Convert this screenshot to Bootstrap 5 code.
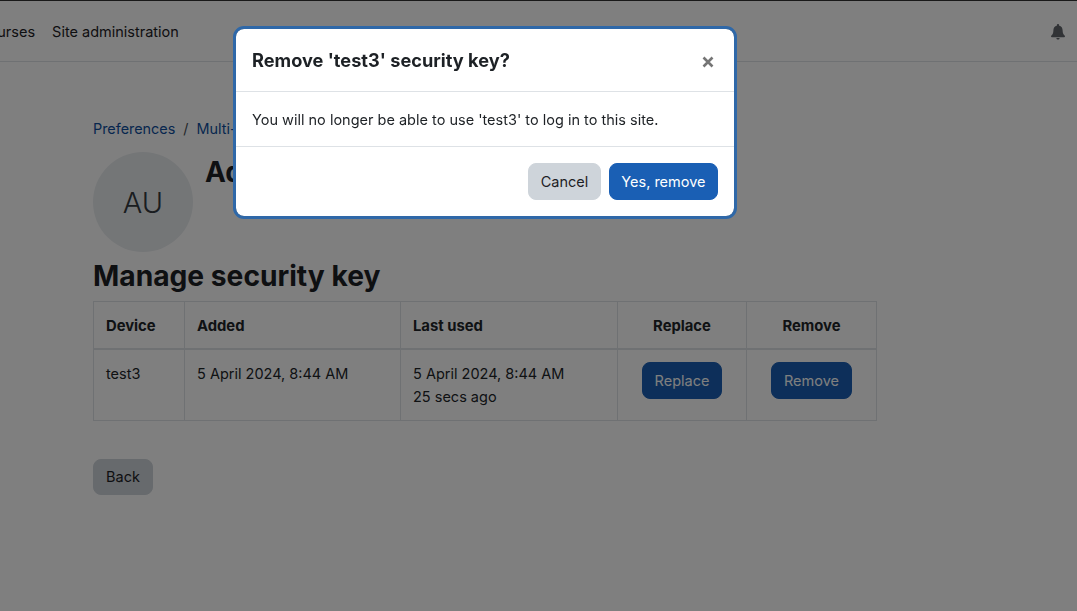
<!DOCTYPE html>
<html lang="en">
<head>
  <meta charset="UTF-8">
  <title>Manage security key</title>
  <link href="https://cdn.jsdelivr.net/npm/bootstrap@5.3.3/dist/css/bootstrap.min.css" rel="stylesheet">
  <style>
    html, body { height: 100%; overflow: hidden; }
    body { font-family: Inter, "Liberation Sans", sans-serif; font-size: 14.5px; color: #1d2125; background: #fff; border-top: 1px solid #333; }
    .top-nav { height: 61px; border-bottom: 1px solid #dee2e6; background: #fff; padding: 2px 12px 0 0; }
    .top-nav a { color: #1d2125; text-decoration: none; }
    .nav-first { margin-left: -22px; margin-right: 17px; }
    .page-wrap { padding: 56px 200px 0 93px; }
    .crumbs { margin-bottom: 0; height: 34px; font-size: 14.4px; }
    .crumbs a { color: #0f4f9e; text-decoration: none; }
    .crumbs .breadcrumb-item + .breadcrumb-item::before { color: #495057; }
    .user-avatar { width: 100px; height: 100px; background: #e9ecef; font-size: 29px; color: #343a40; font-weight: 300; padding-top: 2px; }
    .user-name { font-size: 28px; font-weight: 700; margin: 4px 0 0 12px; line-height: 1.2; }
    .key-title { font-size: 28.2px; font-weight: 700; line-height: 1.2; margin: 8px 0 7px; }
    .key-table { width: 783px; table-layout: fixed; margin-bottom: 0; border-color: #dee2e6; --bs-table-bg: transparent; }
    .key-table th, .key-table td { line-height: 23px; }
    .key-table th { font-size: 14.8px; padding: 13px 12px 10px; }
    .key-table thead th { border-bottom-width: 2px; }
    .key-table td { height: 70px; padding: 12px; }
    .btn { font-size: 14.5px; border-radius: .5rem; padding: 6px 12px; line-height: 23px; }
    .btn-blue { background: #1a5fb4; border-color: #1a5fb4; color: #fff; }
    .btn-grey { background: #ced4da; border-color: #ced4da; color: #1d2125; }
    .back-btn { margin-top: 38px; height: 36px; padding-top: 5.500px; padding-bottom: 5.500px; }
    .modal-dialog.place-dialog { max-width: 504px; margin: 26px 0 0 233px; }
    .place-dialog .modal-content { border: 3px solid #2f68a8; border-radius: 11px; }
    .place-dialog .modal-header { padding: 16px 16px 14px; height: 62.5px; border-color: #dee2e6; }
    .place-dialog .modal-title { font-size: 18.2px; font-weight: 700; line-height: 1.2; color: #1d2125; }
    .place-dialog .modal-body { padding: 17px 16px 16px; height: 54.5px; }
    .place-dialog .modal-footer { padding: 16px; gap: 8px; height: 70px; border-color: #dee2e6; }
    .place-dialog .modal-footer .btn { margin: 0; padding-left: 11.5px; padding-right: 11.5px; }
    .x-btn { background: none; border: 0; padding: 0; line-height: 0; margin: 2px 4px 0 0; }
  </style>
</head>
<body>
  <nav class="top-nav d-flex align-items-center justify-content-between">
    <div class="d-flex">
      <a class="nav-first" href="#">Courses</a>
      <a href="#">Site administration</a>
    </div>
    <svg width="14" height="16" viewBox="0 0 14 16" aria-hidden="true">
      <path fill="#62676d" d="M7 0a1.2 1.2 0 0 0-1.2 1.2v.5C3.6 2.2 2.4 4 2.4 6.2c0 3.2-1 4.4-2 5.4-.3.3-.4.5-.4.8 0 .5.4.8.9.8h12.200c.5 0 .9-.3.9-.8 0-.3-.1-.5-.4-.8-1-1-2-2.200-2-5.400 0-2.200-1.200-4-3.400-4.500v-.5A1.200 1.200 0 0 0 7 0zM5.400 14c0 .9.7 1.600 1.600 1.600s1.600-.7 1.600-1.600z"/>
    </svg>
  </nav>

  <main class="page-wrap">
    <ol class="breadcrumb crumbs">
      <li class="breadcrumb-item"><a href="#">Preferences</a></li>
      <li class="breadcrumb-item"><a href="#">Multi-factor authentication preferences</a></li>
    </ol>
    <div class="d-flex">
      <div class="user-avatar rounded-circle d-flex align-items-center justify-content-center flex-shrink-0">AU</div>
      <h2 class="user-name">Admin User</h2>
    </div>
    <h2 class="key-title">Manage security key</h2>
    <table class="table table-bordered key-table">
      <colgroup>
        <col style="width: 91px">
        <col style="width: 216px">
        <col style="width: 217px">
        <col style="width: 129px">
        <col style="width: 130px">
      </colgroup>
      <thead>
        <tr>
          <th>Device</th>
          <th>Added</th>
          <th>Last used</th>
          <th class="text-center">Replace</th>
          <th class="text-center">Remove</th>
        </tr>
      </thead>
      <tbody>
        <tr>
          <td>test3</td>
          <td>5 April 2024, 8:44 AM</td>
          <td>5 April 2024, 8:44 AM<br>25 secs ago</td>
          <td class="text-center"><button class="btn btn-blue">Replace</button></td>
          <td class="text-center"><button class="btn btn-blue">Remove</button></td>
        </tr>
      </tbody>
    </table>
    <button class="btn btn-grey back-btn">Back</button>
  </main>

  <div class="modal-backdrop show"></div>
  <div class="modal d-block" tabindex="-1">
    <div class="modal-dialog place-dialog">
      <div class="modal-content">
        <div class="modal-header justify-content-between">
          <h5 class="modal-title">Remove 'test3' security key?</h5>
          <button type="button" class="x-btn" aria-label="Close">
            <svg width="12" height="12" viewBox="0 0 12 12" aria-hidden="true">
              <path d="M1.500 1.500l9 9M10.500 1.500l-9 9" stroke="#757575" stroke-width="2.600" fill="none"/>
            </svg>
          </button>
        </div>
        <div class="modal-body">You will no longer be able to use 'test3' to log in to this site.</div>
        <div class="modal-footer">
          <button class="btn btn-grey">Cancel</button>
          <button class="btn btn-blue">Yes, remove</button>
        </div>
      </div>
    </div>
  </div>

  <script src="https://cdn.jsdelivr.net/npm/bootstrap@5.3.3/dist/js/bootstrap.bundle.min.js"></script>
</body>
</html>
